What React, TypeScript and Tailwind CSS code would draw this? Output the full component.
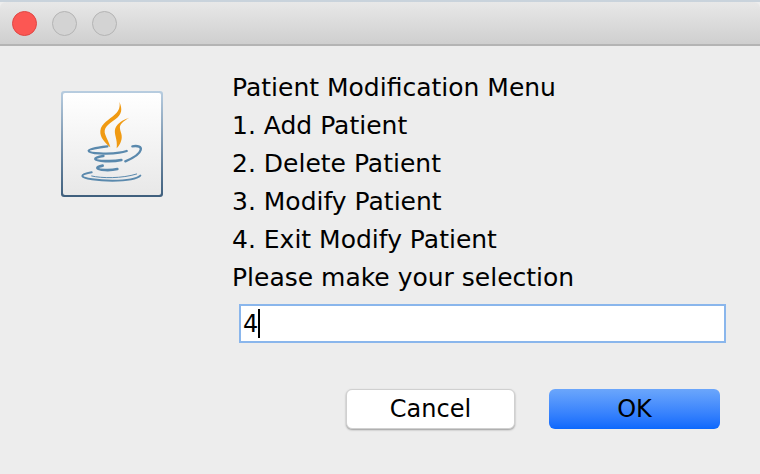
export default function App() {
  const lines = ["Patient Modification Menu", "1. Add Patient", "2. Delete Patient", "3. Modify Patient", "4. Exit Modify Patient", "Please make your selection"];
  return (
    <div className="w-[760px] h-[474px] flex flex-col overflow-hidden bg-[#ededed] font-['DejaVu_Sans','Liberation_Sans',sans-serif] text-black">
      <div className="h-[2px] shrink-0 bg-[#c9d3dc]" />
      <div className="h-[44px] shrink-0 flex items-center gap-[15px] pl-[12px] border-b-2 border-[#b4b4b4] rounded-t-[6px] bg-gradient-to-b from-[#e8e8e8] to-[#cfcfcf]">
        <div className="w-[25px] h-[25px] rounded-full bg-[#fc5753] border border-[#df4744]" />
        <div className="w-[25px] h-[25px] rounded-full bg-[#d3d3d3] border border-[#b4b4b4]" />
        <div className="w-[25px] h-[25px] rounded-full bg-[#d3d3d3] border border-[#b4b4b4]" />
      </div>
      <div className="flex flex-1 pl-[61px] pt-[45px]">
        <div className="relative w-[102px] h-[106px] shrink-0 rounded-[3px] bg-gradient-to-b from-[#b8cde0] to-[#3f5f7d] p-[2px]">
          <div className="w-full h-full rounded-[2px] bg-gradient-to-b from-white to-[#e8e8e8]">
            <svg width="98" height="102" viewBox="39 39 294 306">
              <path d="M208 65c10 22 8 38-12 53-20 14-38 26-30 46 4 12 12 24 15 38-16-14-32-30-30-50 3-22 26-32 45-50 12-11 15-24 12-37z" fill="#f09a12" />
              <path d="M238 113c-18 6-36 16-42 32-6 18 8 32 4 60 12-14 18-28 14-44-4-14-8-22 2-32 6-6 14-12 22-16z" fill="#f09a12" />
              <g fill="none" stroke="#5a89ad" strokeLinecap="round">
                <path d="M172 199c-28 3-56 8-56 13 0 9 60 11 92 6 8-1 16-3 22-5" strokeWidth="7" />
                <path d="M247 199c18-3 28 2 25 11-3 12-22 24-46 34" strokeWidth="7" />
                <path d="M160 228c-16 2-24 6-24 9 2 7 52 9 78 3" strokeWidth="8" />
                <path d="M158 257c-10 2-16 4-16 7 2 7 40 8 60 3" strokeWidth="8" />
                <path d="M125 277c-16 3-28 7-28 11 2 8 46 14 90 14 38 0 74-5 84-15" strokeWidth="6" />
                <path d="M125 288c30 7 90 8 135-6" strokeWidth="3" />
              </g>
            </svg>
          </div>
        </div>
        <div className="ml-[69px] flex flex-col -mt-[22px] w-[494px]">
          {lines.map((l) => (
            <div key={l} className="h-[38px] flex items-center text-[25px] whitespace-nowrap">{l}</div>
          ))}
          <div className="ml-[7px] mt-[7px] w-[487px] h-[39px] bg-white border-2 border-[#8ab6ec] flex items-center pl-[2px] text-[24px]">
            4<span className="w-[2px] h-[29px] bg-black" />
          </div>
          <div className="ml-[114px] mt-[46px] flex gap-[34px]">
            <div className="w-[169px] h-[40px] rounded-[6px] bg-white border border-[#d0d0d0] shadow-[0_1px_2px_rgba(0,0,0,0.35)] flex items-center justify-center text-[24px]">Cancel</div>
            <div className="w-[171px] h-[40px] rounded-[6px] bg-gradient-to-b from-[#6ba6fb] to-[#0a68fd] flex items-center justify-center text-[24px]">OK</div>
          </div>
        </div>
      </div>
    </div>
  );
}
